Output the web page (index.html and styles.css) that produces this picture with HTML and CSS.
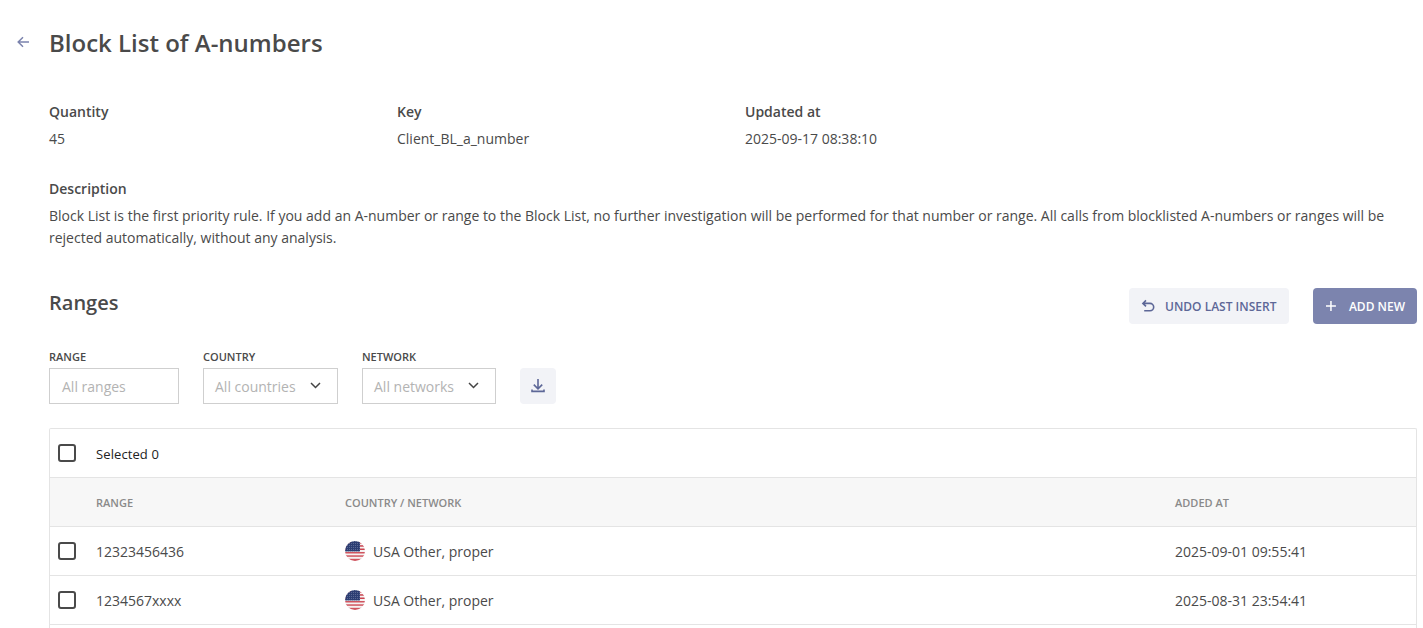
FILE: index.html
```html
<!DOCTYPE html>
<html lang="en">
<head>
<meta charset="utf-8">
<title>Block List of A-numbers</title>
<link rel="stylesheet" href="styles.css">
</head>
<body>
<svg class="defs" width="0" height="0" aria-hidden="true">
  <defs>
    <clipPath id="flag-clip"><circle cx="10" cy="10" r="10"/></clipPath>
    <pattern id="stars" width="2" height="2" patternUnits="userSpaceOnUse">
      <rect width="2" height="2" fill="#2c3e73"/>
      <rect width="1" height="1" fill="#5a6894"/>
    </pattern>
    <symbol id="us-flag" viewBox="0 0 20 20">
      <g clip-path="url(#flag-clip)">
        <rect width="20" height="20" fill="#f6f2f2"/>
        <rect y="1" width="20" height="1.6" fill="#c9434f"/>
        <rect y="4.2" width="20" height="1.5" fill="#c9434f"/>
        <rect y="7.5" width="20" height="1.5" fill="#c9434f"/>
        <rect y="11" width="20" height="1.5" fill="#d0545f"/>
        <rect y="14.3" width="20" height="1.5" fill="#d0545f"/>
        <rect y="17.8" width="20" height="2.2" fill="#d0545f"/>
        <rect width="15" height="10.5" fill="url(#stars)"/>
      </g>
    </symbol>
  </defs>
</svg>
<main class="page">
  <header class="title-row">
    <a class="back" href="#" aria-label="Back">
      <svg width="14" height="12" viewBox="0 0 14 12" fill="none" stroke="#7b83ad" stroke-width="1.5"><path d="M13 6H2.2M7 1.2 2.2 6 7 10.8"/></svg>
    </a>
    <h1 class="title">Block List of A-numbers</h1>
  </header>

  <section class="meta">
    <div class="meta-item"><div class="meta-label">Quantity</div><div class="meta-value">45</div></div>
    <div class="meta-item"><div class="meta-label">Key</div><div class="meta-value">Client_BL_a_number</div></div>
    <div class="meta-item"><div class="meta-label">Updated at</div><div class="meta-value">2025-09-17 08:38:10</div></div>
  </section>

  <section class="description">
    <div class="meta-label">Description</div>
    <p class="description-text">Block List is the first priority rule. If you add an A-number or range to the Block List, no further investigation will be performed for that number or range. All calls from blocklisted A-numbers or ranges will be rejected automatically, without any analysis.</p>
  </section>

  <section class="section-head">
    <h2 class="section-title">Ranges</h2>
    <div class="actions">
      <button class="btn btn-light" type="button">
        <svg width="14" height="13" viewBox="0 0 14 13" fill="none" stroke="#5d6797" stroke-width="1.6"><path d="M5 1.4 1.9 4.4l3.1 3M2 4.4h7a3.7 3.7 0 0 1 0 7.4H3.2"/></svg>
        <span class="btn-text">Undo last insert</span>
      </button>
      <button class="btn btn-primary" type="button">
        <svg width="12" height="12" viewBox="0 0 12 12" fill="none" stroke="#fff" stroke-width="1.5"><path d="M6 1v10M1 6h10"/></svg>
        <span class="btn-text">Add new</span>
      </button>
    </div>
  </section>

  <section class="filters">
    <div class="field">
      <label class="field-label">Range</label>
      <div class="control control-range"><span class="placeholder">All ranges</span></div>
    </div>
    <div class="field">
      <label class="field-label">Country</label>
      <div class="control control-country">
        <span class="placeholder">All countries</span>
        <svg class="chev" width="11" height="7" viewBox="0 0 11 7" fill="none" stroke="#444" stroke-width="1.5"><path d="m1 1 4.5 4.5L10 1"/></svg>
      </div>
    </div>
    <div class="field">
      <label class="field-label">Network</label>
      <div class="control control-network">
        <span class="placeholder">All networks</span>
        <svg class="chev" width="11" height="7" viewBox="0 0 11 7" fill="none" stroke="#444" stroke-width="1.5"><path d="m1 1 4.5 4.5L10 1"/></svg>
      </div>
    </div>
    <button class="icon-btn" type="button" aria-label="Download">
      <svg width="14" height="16" viewBox="0 0 14 16" fill="none" stroke="#5d6797" stroke-width="1.6"><path d="M7 1v9.6M2.8 6.6 7 10.8l4.2-4.2M1 11.6v1.8h12v-1.8"/></svg>
    </button>
  </section>

  <section class="table">
    <div class="selected-row">
      <span class="checkbox"></span>
      <span class="selected-text">Selected 0</span>
    </div>
    <div class="grid-row head-row">
      <span></span><span class="cell">Range</span><span class="cell">Country / Network</span><span class="cell">Added at</span>
    </div>
    <div class="grid-row body-row">
      <span class="checkbox"></span>
      <span class="cell">12323456436</span>
      <span class="country"><svg class="flag" width="20" height="20"><use href="#us-flag"/></svg><span class="cell">USA Other, proper</span></span>
      <span class="cell">2025-09-01 09:55:41</span>
    </div>
    <div class="grid-row body-row">
      <span class="checkbox"></span>
      <span class="cell">1234567xxxx</span>
      <span class="country"><svg class="flag" width="20" height="20"><use href="#us-flag"/></svg><span class="cell">USA Other, proper</span></span>
      <span class="cell">2025-08-31 23:54:41</span>
    </div>
  </section>
</main>
</body>
</html>
```
FILE: styles.css
```css
* { box-sizing: border-box; }
html, body { margin: 0; height: 100%; overflow: hidden; background: #fff; }
body {
  font-family: "Open Sans", "Noto Sans", sans-serif;
  font-size: 14px;
  line-height: 20px;
  color: #4a4a4a;
}
.defs { position: absolute; }
.page {
  height: 628px;
  padding: 0 6px 0 49px;
  display: flex;
  flex-direction: column;
}
.title-row { position: relative; padding-top: 26px; height: 102px; }
.back { position: absolute; left: -33px; top: 36px; display: block; line-height: 0; }
.title { margin: 0; font-size: 24px; line-height: 33px; font-weight: 600; color: #4a4a4a; }
.meta { display: grid; grid-template-columns: repeat(3, 348px); }
.meta-label { font-weight: 600; line-height: 20px; color: #4a4a4a; }
.meta-value { margin-top: 7px; line-height: 20px; }
.description { margin-top: 30px; }
.description-text { margin: 6px 0 0; line-height: 22.4px; }
.section-head {
  margin-top: 38px;
  display: flex;
  justify-content: space-between;
  align-items: flex-start;
  height: 36px;
}
.section-title { margin: 0; font-size: 20px; line-height: 30px; font-weight: 600; }
.actions { display: flex; gap: 24px; }
.btn {
  height: 36px;
  border: 0;
  border-radius: 4px;
  padding: 0 12px;
  display: flex;
  align-items: center;
  font: 600 12px/16px "Open Sans", sans-serif;
  text-transform: uppercase;
  white-space: nowrap;
}
.btn-text { padding-top: 2px; }
.btn-light { width: 160px; gap: 10px; background: #f2f3f7; color: #5d6797; }
.btn-primary { width: 104px; gap: 12px; background: #7c84ae; color: #fff; }
.filters { margin-top: 25px; display: flex; align-items: flex-end; gap: 24px; }
.field { display: flex; flex-direction: column; }
.field-label {
  font-size: 11px;
  line-height: 16px;
  font-weight: 600;
  text-transform: uppercase;
  color: #4a4a4a;
  margin-bottom: 3px;
}
.control {
  height: 36px;
  border: 1px solid #cfcfcf;
  padding: 0 12px;
  display: flex;
  align-items: center;
  justify-content: space-between;
}
.control-range { width: 130px; }
.control-country { width: 135px; padding: 0 16px 0 11px; }
.control-network { width: 134px; padding: 0 16px 0 11px; }
.placeholder { color: #b3b3b3; padding-top: 2px; }
.icon-btn {
  width: 36px;
  height: 36px;
  border: 0;
  border-radius: 4px;
  background: #f2f3f7;
  display: flex;
  align-items: center;
  justify-content: center;
}
.table {
  margin-top: 24px;
  flex: 1;
  border: 1px solid #e4e4e4;
  border-bottom: 0;
  border-radius: 2px 2px 0 0;
}
.selected-row {
  height: 49px;
  display: flex;
  align-items: center;
  padding: 0 0 0 8px;
  border-bottom: 1px solid #e4e4e4;
}
.selected-text { margin-left: 20px; padding-top: 2px; font-size: 13px; letter-spacing: .1px; color: #222; }
.checkbox {
  display: block;
  width: 18px;
  height: 18px;
  border: 2px solid #4a4a4a;
  border-radius: 3px;
  flex: none;
}
.grid-row {
  height: 49px;
  display: grid;
  grid-template-columns: 46px 249px 830px 1fr;
  align-items: center;
  border-bottom: 1px solid #e4e4e4;
}
.grid-row > .checkbox { margin-left: 8px; }
.cell { padding-top: 2px; }
.head-row {
  background: #f7f7f7;
  font-size: 11px;
  font-weight: 600;
  text-transform: uppercase;
  color: #8a8a8a;
}
.country { display: flex; align-items: center; gap: 8px; }
.flag { flex: none; }
```
